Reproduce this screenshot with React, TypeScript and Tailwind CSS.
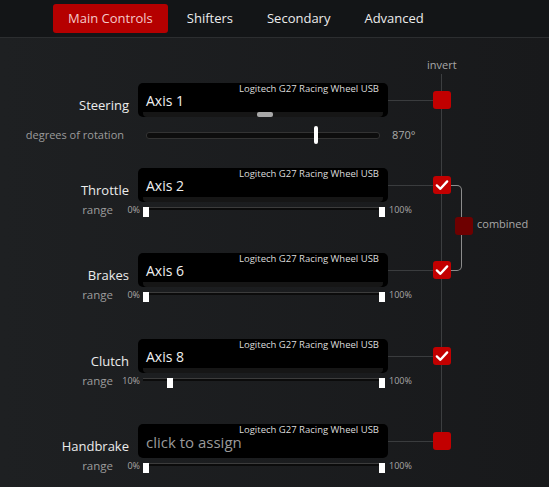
import React from "react";

const DEVICE = "Logitech G27 Racing Wheel USB";

function Check() {
  return (
    <svg viewBox="0 0 18 18" className="h-[18px] w-[18px]">
      <path d="M3.8 9.4 L7.4 12.8 L14.2 5.4" fill="none" stroke="#ffffff" strokeWidth="2.3" strokeLinecap="round" strokeLinejoin="round" />
    </svg>
  );
}

function Box({ axis, scrollThumb }: { axis?: string; scrollThumb?: boolean }) {
  return (
    <div className="relative flex h-[34px] w-[250px] flex-col rounded-[5px] bg-black">
      <span className="absolute right-[9px] top-0 text-[9.5px] leading-[12px] text-[#dcdcdc]">{DEVICE}</span>
      {axis ? (
        <span className="pl-[8px] pt-[9px] text-[14px] leading-[18px] text-[#f0f0f0]">{axis}</span>
      ) : (
        <span className="pl-[8px] pt-[8px] text-[15px] leading-[20px] text-[#9a9a9a]">click to assign</span>
      )}
      {axis && (
        <div className="mx-[5px] mt-auto h-[5px] rounded-b-[4px] bg-[#161616]">
          {scrollThumb && <div className="ml-[114px] h-[5px] w-[16px] rounded-[2px] bg-[#a8a8a8]" />}
        </div>
      )}
    </div>
  );
}

function Toggle({ checked }: { checked?: boolean }) {
  return (
    <div className="relative z-10 flex h-[18px] w-[18px] items-center justify-center rounded-[3px] bg-[#c20000]">
      {checked && <Check />}
    </div>
  );
}

function AxisRow({ label, axis, checked, scrollThumb }: { label: string; axis?: string; checked?: boolean; scrollThumb?: boolean }) {
  return (
    <div className="flex items-end">
      <span className="w-[129px] pb-[2px] text-right text-[13px] leading-[20px] text-[#ececec]">{label}</span>
      <div className="ml-[9px] flex items-center">
        <Box axis={axis} scrollThumb={scrollThumb} />
        <div className="h-px w-[45px] bg-[#3a3c3e]" />
        <Toggle checked={checked} />
      </div>
    </div>
  );
}

function RangeRow({ min, left }: { min: string; left: number }) {
  return (
    <div className="mt-[1px] flex h-[14px] items-center">
      <span className="w-[113px] text-right text-[11.5px] leading-[14px] text-[#9c9c9c]">range</span>
      <span className="w-[27px] text-right text-[9px] leading-[14px] text-[#a8a8a8]">{min}</span>
      <div className="relative ml-[3px] h-[14px] w-[242px]">
        <div className="absolute left-0 right-0 top-[4px] h-[3px] border-t border-[#3c3c3c] bg-[#0b0b0b]" />
        <div className="absolute top-[4px] h-[10px] w-[6px] bg-white" style={{ left: left }} />
        <div className="absolute right-0 top-[4px] h-[10px] w-[6px] bg-white" />
      </div>
      <span className="ml-[4px] text-[9px] leading-[14px] text-[#a8a8a8]">100%</span>
    </div>
  );
}

export default function App() {
  const tabs = ["Main Controls", "Shifters", "Secondary", "Advanced"];
  return (
    <div
      className="h-[487px] w-[549px] overflow-hidden bg-gradient-to-r from-[#1e2022] to-[#18191b]"
      style={{ fontFamily: '"Open Sans", "Noto Sans", sans-serif' }}
    >
      <div className="flex h-[38px] items-start gap-[4px] border-b border-[#2c2e30] bg-[#131517] pl-[53px] pt-[4px]">
        {tabs.map((t, i) => (
          <div
            key={t}
            className={
              i === 0
                ? "flex h-[29px] items-center rounded-[3px] bg-[#b50000] px-[15px] text-[13px] text-[#f4caca]"
                : "flex h-[29px] items-center px-[15px] text-[13px] text-[#ececec]"
            }
          >
            {t}
          </div>
        ))}
      </div>

      <div className="relative pt-[20px]">
        <div className="absolute left-[441px] top-[36px] h-[368px] w-px bg-[#3c3e40]" />
        <div className="absolute left-[451px] top-[147px] h-[86px] w-[11px] rounded-r-[5px] border-y border-r border-[#8c8c8c]" />
        <div className="absolute left-[455px] top-[179px] h-[18px] w-[18px] rounded-[3px] bg-[#6e0000]" />
        <span className="absolute left-[477px] top-[178px] text-[11px] leading-[16px] text-[#a8a8a8]">combined</span>

        <div className="ml-[427px] h-[14px] text-[11px] leading-[14px] text-[#a8a8a8]">invert</div>

        <div className="mt-[11px]">
          <AxisRow label="Steering" axis="Axis 1" scrollThumb />
          <div className="mt-[10px] flex h-[16px] items-center">
            <span className="w-[124px] text-right text-[11px] leading-[16px] text-[#9c9c9c]">degrees of rotation</span>
            <div className="relative ml-[22px] h-[7px] w-[234px] rounded-[3px] border border-[#333] bg-[#0d0d0d]">
              <div className="absolute left-[167px] top-[-7px] h-[18px] w-[4px] rounded-full bg-white" />
            </div>
            <span className="ml-[12px] text-[11px] leading-[16px] text-[#a8a8a8]">870°</span>
          </div>
        </div>

        <div className="mt-[25px]">
          <AxisRow label="Throttle" axis="Axis 2" checked />
          <RangeRow min="0%" left={0} />
        </div>

        <div className="mt-[36px]">
          <AxisRow label="Brakes" axis="Axis 6" checked />
          <RangeRow min="0%" left={0} />
        </div>

        <div className="mt-[37px]">
          <AxisRow label="Clutch" axis="Axis 8" checked />
          <RangeRow min="10%" left={24} />
        </div>

        <div className="mt-[36px]">
          <AxisRow label="Handbrake" />
          <RangeRow min="0%" left={0} />
        </div>
      </div>
    </div>
  );
}
